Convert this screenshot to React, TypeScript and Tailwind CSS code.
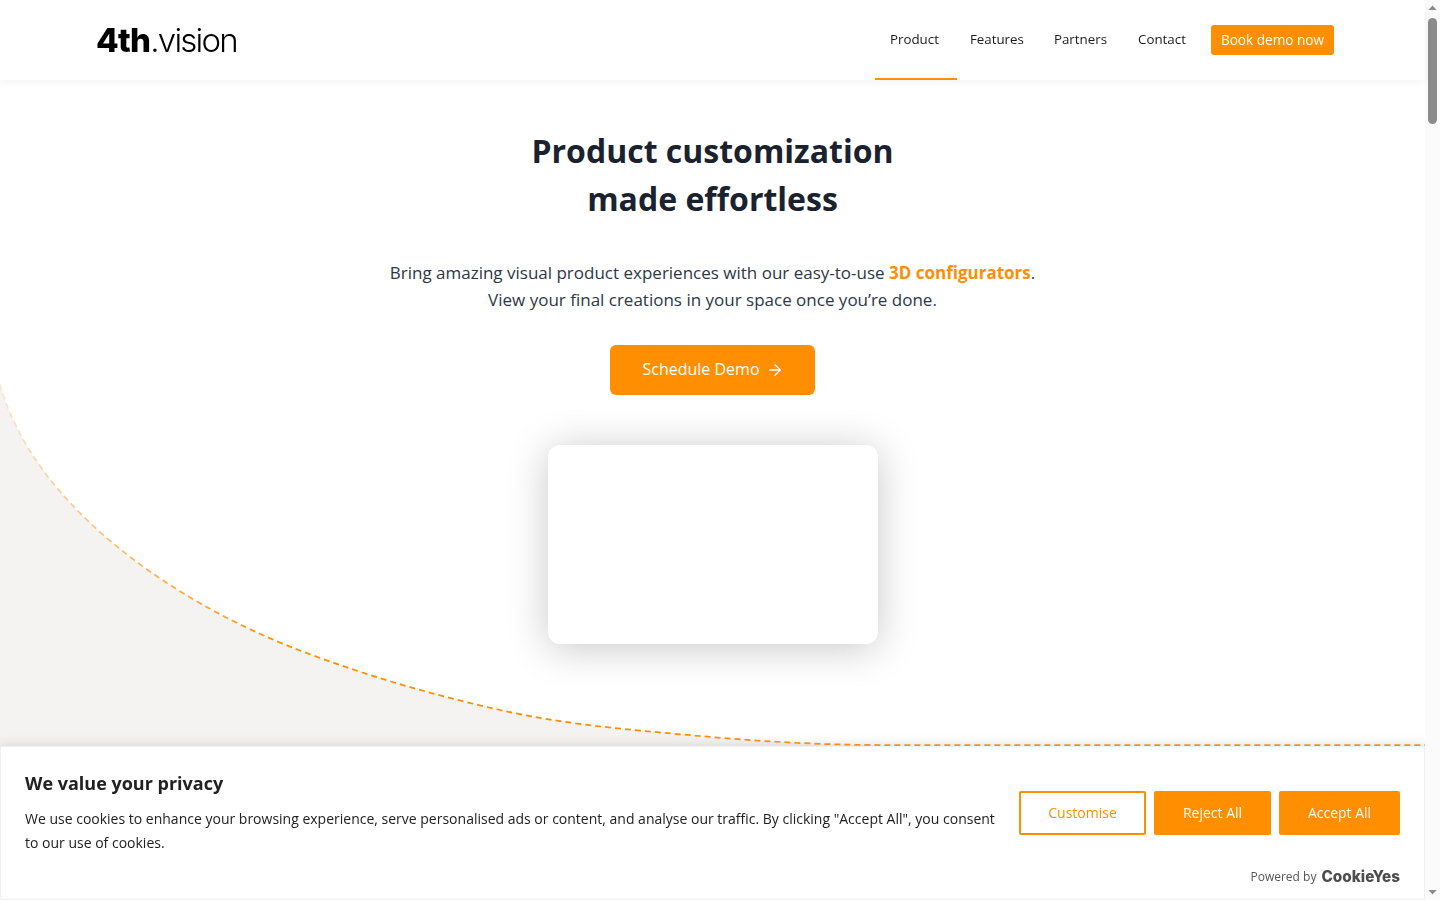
import React from "react";
import { ArrowRight } from "lucide-react";

const font = { fontFamily: '"Open Sans", "Noto Sans", sans-serif' };
const curve = "M0 384 C35 510 180 605 300 650.5 C367 676 433 695 500 710 C567 725 633 730 700 736 C760 741.4 820 745 880 745";

function Curve() {
  return (
    <svg className="absolute left-0 top-[340px] w-[1425px] h-[420px]" viewBox="0 340 1425 420" fill="none">
      <defs>
        <linearGradient id="fade" gradientUnits="userSpaceOnUse" x1="0" y1="384" x2="300" y2="650">
          <stop offset="0" stopColor="#ff8f00" stopOpacity="0.15" />
          <stop offset="1" stopColor="#ff8f00" stopOpacity="1" />
        </linearGradient>
      </defs>
      <path d={curve + " L880 746 L0 746 Z"} fill="#f4f3f2" />
      <path d={curve + " L1425 745"} stroke="url(#fade)" strokeWidth="1.75" strokeDasharray="6 4" />
    </svg>
  );
}

function Scrollbar() {
  return (
    <div className="fixed right-0 top-0 bottom-0 w-[15px] bg-[#fbfbfb] flex flex-col items-center">
      <svg width="15" height="15" viewBox="0 0 15 15" className="shrink-0"><path d="M3.5 10 L7.5 5.5 L11.5 10 Z" fill="#8a8a8a" /></svg>
      <div className="w-[9px] h-[106px] mt-[3px] rounded-full bg-[#8b8b8b]" />
      <div className="flex-1" />
      <svg width="15" height="15" viewBox="0 0 15 15" className="shrink-0"><path d="M3.5 5 L7.5 9.5 L11.5 5 Z" fill="#8a8a8a" /></svg>
    </div>
  );
}

function NavLink({ children, extra }: { children: React.ReactNode; extra: string }) {
  return (
    <a className={"h-20 pt-[2px] flex items-center justify-center text-[13.33px] text-[#1a1a1a] border-b-2 " + extra}>
      {children}
    </a>
  );
}

export default function App() {
  return (
    <div className="relative h-[900px] overflow-hidden bg-white" style={font}>
      <div className="relative w-[1425px] h-[900px]">
        <Curve />
        <header className="relative z-10 h-20 bg-white shadow-[0_2px_8px_rgba(0,0,0,0.05)] flex items-center pl-[96px] pr-[91px]">
          <div className="flex items-baseline text-black leading-none pt-[1px]" style={{ fontFamily: '"Inter", sans-serif' }}>
            <span className="text-[33px] font-extrabold tracking-[-0.7px]">4th</span>
            <span className="text-[33px] font-light tracking-[-1.8px]">.vision</span>
          </div>
          <nav className="ml-auto flex items-center">
            <NavLink extra="border-[#ff8f00] pl-[15px] pr-[18px] -mr-[2.5px]">Product</NavLink>
            <NavLink extra="border-transparent pl-[15.5px] pr-[14.5px]">Features</NavLink>
            <NavLink extra="border-transparent px-[15.5px]">Partners</NavLink>
            <NavLink extra="border-transparent px-[15.5px]">Contact</NavLink>
            <a className="ml-[9.5px] h-[30px] px-[10px] flex items-center rounded-[3px] bg-[#ff8f00] text-white text-[13.6px]">Book demo now</a>
          </nav>
        </header>
        <main className="relative flex flex-col items-center pt-[47px]">
          <h1 className="text-[32px] leading-[48px] font-bold text-[#1a2230] text-center">
            Product customization<br />made effortless
          </h1>
          <p className="mt-[36px] text-[17px] leading-[27px] text-[#2d3748] text-center">
            Bring amazing visual product experiences with our easy-to-use <span className="font-bold text-[#ff8f00]">3D configurators</span>.<br />
            View your final creations in your space once you’re done.
          </p>
          <a className="mt-[32px] h-[50px] w-[205px] pb-[2px] pl-[1px] flex items-center justify-center gap-[6px] rounded-md bg-[#ff8f00] text-white text-[16px]">
            Schedule Demo <ArrowRight size={18} strokeWidth={1.75} className="mt-[2px]" />
          </a>
          <div className="mt-[50px] w-[330px] h-[199px] rounded-xl bg-white shadow-[0_4px_40px_rgba(0,0,0,0.22)]" />
        </main>
      </div>
      <div className="fixed left-0 bottom-0 w-[1425px] h-[154px] bg-white border border-[#f0f0f0] shadow-[0_-1px_10px_rgba(172,171,171,0.4)] px-[24px] pt-[23px]">
        <div className="text-[18px] leading-[27px] font-bold text-[#212121]">We value your privacy</div>
        <div className="flex mt-[10px]">
          <p className="w-[970px] text-[14px] leading-[24px] text-[#212121]">
            We use cookies to enhance your browsing experience, serve personalised ads or content, and analyse our traffic. By clicking "Accept All", you consent to our use of cookies.
          </p>
          <div className="ml-auto flex gap-2 -mt-[16px]">
            <button className="w-[127px] h-[44px] pb-[2px] rounded-[2px] border-2 border-[#ff8f00] text-[#ff8f00] text-[14px]">Customise</button>
            <button className="w-[117px] h-[44px] pb-[2px] rounded-[2px] bg-[#ff8f00] text-white text-[14px]">Reject All</button>
            <button className="w-[121px] h-[44px] pb-[2px] rounded-[2px] bg-[#ff8f00] text-white text-[14px]">Accept All</button>
          </div>
        </div>
        <div className="absolute right-[24px] bottom-[10px] flex items-center gap-[5px]">
          <span className="text-[12px] text-[#555] -mt-[2px]">Powered by</span>
          <span className="text-[15.3px] font-extrabold text-[#4d4d4d]" style={{ fontFamily: '"Inter", sans-serif' }}>CookieYes</span>
        </div>
      </div>
      <Scrollbar />
    </div>
  );
}
